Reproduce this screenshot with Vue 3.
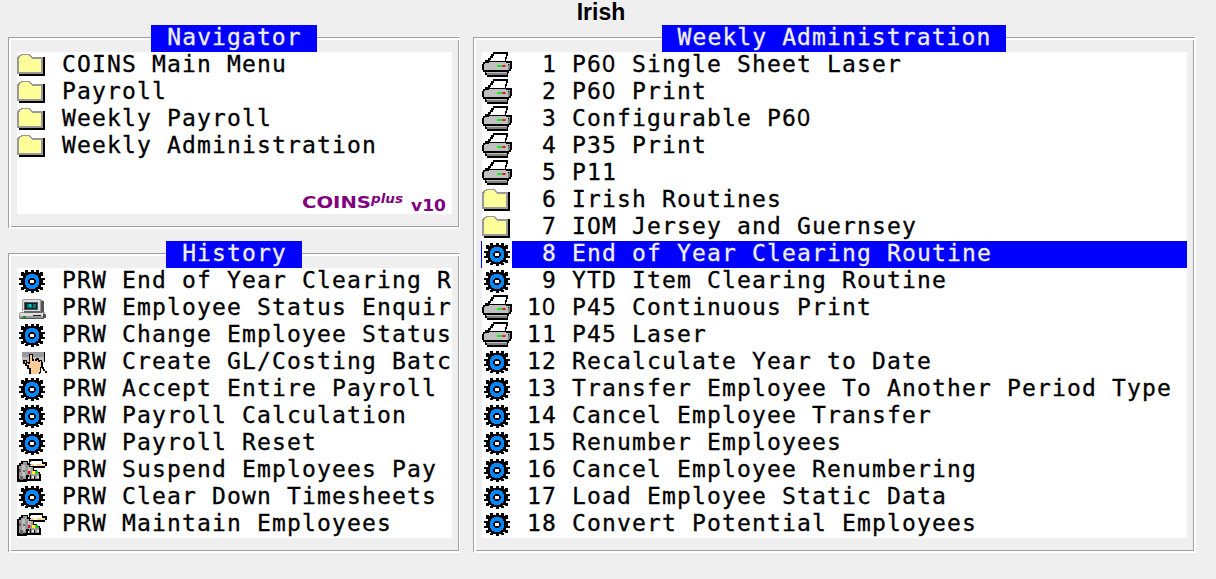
<script setup>
import { h } from 'vue'

const nav = ['COINS Main Menu', 'Payroll', 'Weekly Payroll', 'Weekly Administration'].map(t => ['folder', t])
const history = [
  ['gear', 'PRW End of Year Clearing R'],
  ['computer', 'PRW Employee Status Enquir'],
  ['gear', 'PRW Change Employee Status'],
  ['hand', 'PRW Create GL/Costing Batc'],
  ['gear', 'PRW Accept Entire Payroll'],
  ['gear', 'PRW Payroll Calculation'],
  ['gear', 'PRW Payroll Reset'],
  ['device', 'PRW Suspend Employees Pay'],
  ['gear', 'PRW Clear Down Timesheets'],
  ['device', 'PRW Maintain Employees']
]
const weekly = [
  ['printer', 'P60 Single Sheet Laser'],
  ['printer', 'P60 Print'],
  ['printer', 'Configurable P60'],
  ['printer', 'P35 Print'],
  ['printer', 'P11'],
  ['folder', 'Irish Routines'],
  ['folder', 'IOM Jersey and Guernsey'],
  ['gear', 'End of Year Clearing Routine'],
  ['gear', 'YTD Item Clearing Routine'],
  ['printer', 'P45 Continuous Print'],
  ['printer', 'P45 Laser'],
  ['gear', 'Recalculate Year to Date'],
  ['gear', 'Transfer Employee To Another Period Type'],
  ['gear', 'Cancel Employee Transfer'],
  ['gear', 'Renumber Employees'],
  ['gear', 'Cancel Employee Renumbering'],
  ['gear', 'Load Employee Static Data'],
  ['gear', 'Convert Potential Employees']
].map(([icon, text], i) => [icon, String(i + 1).padStart(2) + ' ' + text])

const panels = [
  { id: 'nav', title: 'Navigator', rows: nav },
  { id: 'history', title: 'History', rows: history },
  { id: 'weekly', title: 'Weekly Administration', rows: weekly, selected: 7 }
]

// Each shape is [fill, path] on a 30x27 grid, painted in order.
const shapes = {
  folder: [
    ['#000', 'M2 22H26V5H28V24H2z'],
    ['#999', 'M0 5H1V4H2V3H4V2H13V3H14V4H15V5H26V22H0z'],
    ['#ff9', 'M2 6H3V4H5V3H12V4H13V5H14V6H15V7H24V20H2z']
  ],
  printer: [
    ['#000', 'M11 0H26V4H25V7H24V9H30V17H29V19H27V21H26V25H5V23H3V20H1V18H0V12H1V10H3V8H6V6H8V4H9V2H11z'],
    ['#fff', 'M12 2H24V5H23V9H8V8H9V6H11V4H12z'],
    ['#c0c0c0', 'M3 11H7V10H24V11H28V12H26V13H25V14H2V12H3z'],
    ['#c0c0c0', 'M2 13H26V18H2zM4 20H25V21H4z'],
    ['#808080', 'M26 13H27V12H28V17H27V18H26zM5 21H25V23H5z'],
    ['#0f0', 'M15 13H19V15H15z'],
    ['#f00', 'M21 13H23V15H21z'],
    ['#888', 'M19 13H21V15H19zM23 13H24V15H23z']
  ],
  computer: [
    ['#999', 'M6 4H24V5H26V16H5V5H6z'],
    ['#ddd', 'M6 5H23V16H6z'],
    ['#555', 'M24 6H27V17H24zM7 7H21V15H7z'],
    ['#022', 'M8 8H20V14H8z'],
    ['#077', 'M10 9H19V13H10z'],
    ['#022', 'M15 9H16V13H15z'],
    ['#0cc', 'M12 9H14V12H12z'],
    ['#666', 'M7 16H25V18H7z'],
    ['#999', 'M3 17H7V18H25V17H28V22H27V24H2V18H3z'],
    ['#ddd', 'M3 18H26V21H3z'],
    ['#555', 'M26 19H29V23H27V24H3V23H26z'],
    ['#090', 'M6 21H9V23H6z'],
    ['#222', 'M16 20H24V21H16z']
  ],
  hand: [
    ['#999', 'M5 3H27V8H5z'],
    ['#c0c0c0', 'M5 8H27V13H5z'],
    ['#000', 'M12 5H16V10H19V9H22V11H25V13H26V19H24V24H23V25H12V20H10V17H8V15H6V11H10V13H12z'],
    ['#fc9', 'M13 6H15V12H17V10H18V12H20V11H21V13H23V12H24V18H23V23H22V25H14V19H12V16H10V14H8V12H9V14H11V15H13z'],
    ['#000', 'M27 3H28V13H27zM25 18H27V20H28V22H30V24H28V22H26V20H25z']
  ],
  device: [
    ['#000', 'M12 2H26V5H30V9H28V11H17V13H20V15H23V17H24V24H10V25H0V8H2V6H4V4H11V6H12z'],
    ['#999', 'M2 9H4V7H6V5H10V8H12V10H16V14H19V16H22V22H2z'],
    ['#c0c0c0', 'M5 8H8V20H5zM11 10H14V14H11zM16 16H18V18H16z'],
    ['#fff', 'M14 4H25V7H13V5H14z'],
    ['#fc9', 'M14 7H28V9H13V8H14z'],
    ['#ffd', 'M17 7H20V9H17zM24 7H27V8H24z'],
    ['#666', 'M2 12H4V15H2zM3 19H6V23H3zM6 13H8V15H6z'],
    ['#f00', 'M11 14H13V17H11z'],
    ['#ff0', 'M15 14H18V17H15z'],
    ['#0d0', 'M19 14H21V17H19z'],
    ['#000', 'M9 18H12V24H9zM13 18H14V24H13zM17 19H18V24H17z'],
    ['#eee', 'M11 20H12V22H11zM15 19H17V21H15zM20 19H22V21H20z']
  ],
  gear: [
    ['#000', 'M8 2H11V4H14V2H17V4H19V2H22V5H23V4H26V8H24V10H28V12H26V15H28V17H24V19H26V22H23V21H21V22H22V24H19V23H17V25H14V23H11V24H8V22H9V21H7V22H4V19H6V17H2V15H4V12H2V10H6V8H4V4H7V5H8z'],
    ['#08f', 'M12 6H18V7H20V8H21V10H22V17H21V19H19V20H18V21H12V20H10V19H9V17H8V10H9V8H10V7H12z'],
    ['#000', 'M13 10H17V11H18V12H19V15H18V16H17V17H13V16H12V15H11V12H12V11H13z'],
    ['#fff', 'M13 12H17V15H13z']
  ]
}

const Icon = ({ name }) =>
  h('svg', { viewBox: '0 0 30 27', width: 30, height: 27, 'shape-rendering': 'crispEdges' },
    shapes[name].map(([fill, d]) => h('path', { fill, d })))
Icon.props = ['name']

const pieces = text => text.split(/(0)/).filter(Boolean)
</script>

<template>
  <main class="screen">
    <h1 class="title">Irish</h1>
    <div class="panels">
      <section v-for="p in panels" :key="p.id" class="panel" :class="p.id">
        <h2 class="legend">{{ p.title }}</h2>
        <ul class="list">
          <li v-for="(row, i) in p.rows" :key="i" class="row" :class="{ selected: p.selected === i }">
            <span class="icon"><Icon :name="row[0]" /></span>
            <span class="label"><span v-for="(s, j) in pieces(row[1])" :key="j" :class="{ zero: s === '0' }">{{ s }}</span></span>
          </li>
        </ul>
        <svg v-if="p.id === 'nav'" class="brand" width="146" height="22" viewBox="0 0 146 22">
          <text x="1" y="15" font-size="16" textLength="69" lengthAdjust="spacingAndGlyphs">COINS</text>
          <text x="70" y="10" font-size="12.5" font-style="italic" textLength="32" lengthAdjust="spacingAndGlyphs">plus</text>
          <text x="110" y="18" font-size="15" textLength="35" lengthAdjust="spacingAndGlyphs">v10</text>
        </svg>
      </section>
    </div>
  </main>
</template>

<style>
body { background: #efefef; overflow: hidden; }
</style>

<style scoped>
.screen { width: 1216px; height: 579px; background: #efefef; color: #000; }
.title {
  margin: 0;
  height: 37px;
  padding-right: 14px;
  font: bold 23px/24px "Liberation Sans", Arial, sans-serif;
  text-align: center;
}
.panels {
  display: grid;
  grid-template-columns: 452px 723px;
  grid-template-rows: 192px 300px;
  gap: 24px 13px;
  padding-left: 8px;
}
.panel {
  position: relative;
  display: flex;
  flex-direction: column;
  box-sizing: border-box;
  border: 1px solid #a0a0a0;
  border-right-color: #fff;
  border-bottom: 2px solid #fff;
  padding: 0 7px 0 8px;
  box-shadow: inset 2px 2px #fff, inset -1px -1px #a0a0a0;
}
.weekly { grid-column: 2; grid-row: 1 / 3; border-right-width: 2px; }
.history { grid-column: 1; grid-row: 2; }
.legend {
  align-self: center;
  height: 27px;
  margin: -13px 1px 0 0;
  padding: 0 15px 0 16px;
  background: #00f;
  color: #efefef;
  white-space: pre;
}
.legend, .label {
  font: 23px/25px "DejaVu Sans Mono", monospace;
  letter-spacing: 1.153px;
  -webkit-text-stroke: 0.3px currentColor;
}
.legend { letter-spacing: 1.1px; }
.list { list-style: none; margin: 0; padding: 0; background: #fff; }
.nav .list { height: 162px; }
.row { display: flex; height: 27px; }
.icon { flex: none; width: 30px; height: 27px; background: #fff; }
.icon svg { display: block; }
.label { flex: 1; padding-left: 15px; white-space: pre; overflow: hidden; }
.selected .label { background: #00f; color: #efefef; }
.selected .icon { box-shadow: -1px 0 #00f; }
.zero { font-family: "Noto Sans", sans-serif; line-height: 20px; letter-spacing: 1.84px; }
.brand {
  position: absolute;
  right: 12px;
  bottom: 12px;
  overflow: visible;
  fill: #800080;
  font-family: "DejaVu Sans", sans-serif;
  font-weight: bold;
}
</style>
